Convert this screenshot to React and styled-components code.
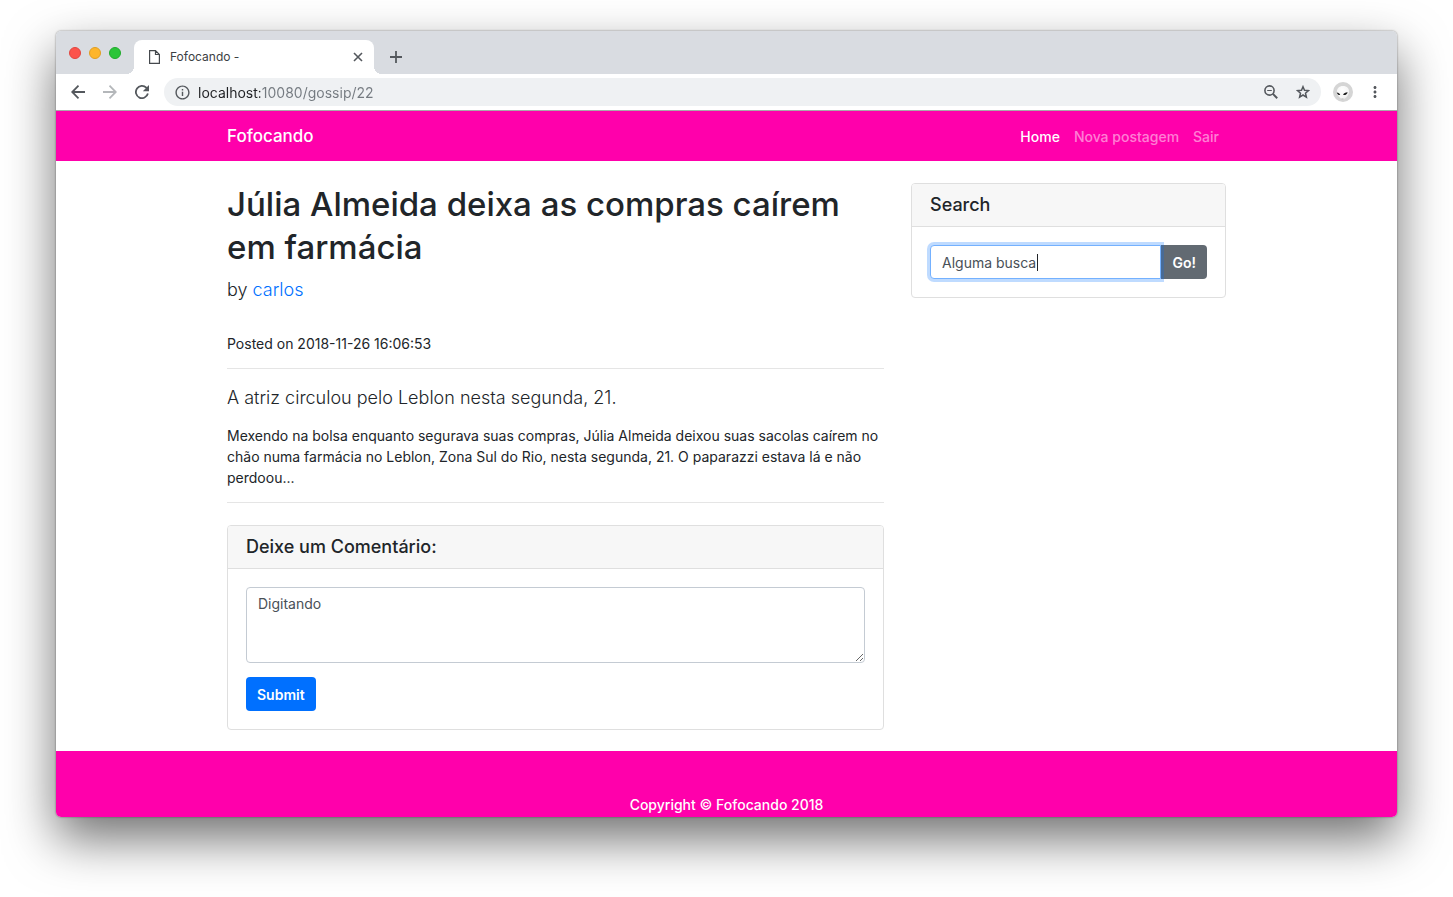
import React from "react";
import styled, { createGlobalStyle, css } from "styled-components";
import { MdInfoOutline, MdMoreVert } from "react-icons/md";

const GlobalStyle = createGlobalStyle`
  *, *::before, *::after { box-sizing: border-box; }
  body {
    margin: 0;
    background: #fff;
    color: #212529;
    font-family: Inter, "Liberation Sans", sans-serif;
    font-size: 14px;
    line-height: 21px;
  }
  button, input, textarea { font: inherit; }
  h1, h5, p { margin: 0; }
`;

/* ---------- browser window ---------- */

const Desktop = styled.div`
  padding: 31px 56px 80px;
`;

const BrowserWindow = styled.div`
  overflow: hidden;
  background: #fff;
  border-radius: 5px;
  box-shadow: 0 22px 50px rgba(0, 0, 0, 0.56), 0 0 2px rgba(0, 0, 0, 0.5);
`;

const TabStrip = styled.div`
  display: flex;
  align-items: flex-end;
  height: 43px;
  background: #d9dce1;
`;

const TrafficLights = styled.div`
  display: flex;
  align-self: center;
  gap: 8px;
  padding: 0 13px;
`;

const Light = styled.button`
  width: 12px;
  height: 12px;
  padding: 0;
  border: 1px solid ${(p) => p.$edge};
  border-radius: 50%;
  background: ${(p) => p.$fill};
`;

const Tab = styled.div`
  position: relative;
  display: flex;
  align-items: center;
  width: 240px;
  height: 34px;
  padding: 0 8px 1px 15px;
  background: #fff;
  border-radius: 8px 8px 0 0;
  color: #3c4043;
  font-size: 12px;

  &::before,
  &::after {
    content: "";
    position: absolute;
    bottom: 0;
    width: 8px;
    height: 8px;
  }
  &::before {
    right: 100%;
    background: radial-gradient(circle at 0 0, transparent 8px, #fff 8px);
  }
  &::after {
    left: 100%;
    background: radial-gradient(circle at 100% 0, transparent 8px, #fff 8px);
  }
`;

const TabTitle = styled.span`
  flex: 1;
  padding-left: 10px;
`;

const IconButton = styled.button`
  display: flex;
  align-items: center;
  justify-content: center;
  width: ${(p) => p.$width || 32}px;
  height: ${(p) => p.$height || 32}px;
  padding: 0;
  border: 0;
  background: none;
  color: ${(p) => p.$color || "#54585d"};
`;

const NewTab = styled(IconButton)`
  margin-left: 6px;
`;

const Toolbar = styled.div`
  display: flex;
  align-items: center;
  height: 37px;
  padding: 0 6px;
  border-bottom: 1px solid #a9a9a9;
`;

const AddressBar = styled.label`
  display: flex;
  flex: 1;
  align-items: center;
  height: 28px;
  margin: 0 6px;
  padding: 0 2px 0 10px;
  border-radius: 14px;
  background: #eff1f3;
  color: #54585d;
`;

const AddressInput = styled.input`
  flex: 1;
  min-width: 0;
  padding: 0;
  margin-left: 7px;
  border: 0;
  outline: 0;
  background: linear-gradient(to right, #202124 62px, #747a80 62px);
  background-clip: text;
  color: transparent;
`;

/* ---------- page ---------- */

const Container = styled.div`
  width: 100%;
  max-width: 1027px;
  margin: 0 auto;
  padding: 0 14px;
`;

const Navbar = styled.nav`
  background: #ff00ab;
`;

const NavRow = styled(Container)`
  display: flex;
  align-items: center;
  justify-content: space-between;
  height: 50px;
`;

const Brand = styled.a`
  color: #fff;
  font-size: 17px;
  font-weight: 500;
  line-height: 22px;
  text-decoration: none;
`;

const NavLinks = styled.div`
  display: flex;
  gap: 14px;
  padding-right: 7px;
`;

const NavLink = styled.a`
  color: ${(p) => (p.$active ? "#fff" : "rgba(255, 255, 255, 0.5)")};
  font-weight: 500;
  text-decoration: none;
`;

const Columns = styled(Container)`
  display: grid;
  grid-template-columns: minmax(0, 657fr) minmax(0, 315fr);
  align-items: start;
  gap: 27px;
  padding-top: 22px;
  padding-bottom: 21px;
`;

const Title = styled.h1`
  margin-bottom: 7px;
  font-size: 33px;
  font-weight: 500;
  line-height: 43px;
`;

const Lead = styled.p`
  font-size: 18px;
  font-weight: 300;
  line-height: 27px;
`;

const AuthorLink = styled.a`
  color: #0070ff;
  text-decoration: none;
`;

const PostedOn = styled.p`
  margin-top: 30px;
`;

const Rule = styled.hr`
  margin: 14px 0 15px;
  border: 0;
  border-top: 1px solid #e5e5e5;
`;

const BodyText = styled.p`
  margin-top: 14px;
`;

const Card = styled.section`
  border: 1px solid #dfdfdf;
  border-radius: 4px;
  background: #fff;
  ${(p) =>
    p.$spaced &&
    css`
      margin-top: 22px;
    `}
`;

const CardHeader = styled.h5`
  padding: 10px 18px;
  border-bottom: 1px solid #dfdfdf;
  border-radius: 3px 3px 0 0;
  background: #f7f7f7;
  font-size: 18px;
  font-weight: 500;
  line-height: 22px;
`;

const CardForm = styled.form`
  padding: 18px;
`;

const field = css`
  display: block;
  width: 100%;
  padding: 5px 11px;
  border: 1px solid #c4cbd3;
  background: #fff;
  color: #495057;
  outline: 0;
`;

const SearchGroup = styled.div`
  display: flex;
`;

const SearchField = styled.div`
  position: relative;
  z-index: 1;
  flex: 1;
  min-width: 0;
`;

const SearchInput = styled.input`
  ${field}
  height: 34px;
  border-color: #74b1ff;
  border-radius: 4px 0 0 4px;
  box-shadow: 0 0 0 3px rgba(0, 112, 255, 0.25);
`;

const Caret = styled.span`
  position: absolute;
  top: 9px;
  left: 107px;
  width: 1px;
  height: 17px;
  background: #212529;
`;

const Button = styled.button`
  height: 34px;
  padding: 0 11px;
  border: 0;
  border-radius: ${(p) => (p.$attached ? "0 4px 4px 0" : "4px")};
  background: ${(p) => (p.$primary ? "#0070ff" : "#626a72")};
  color: #fff;
  font-weight: 600;
`;

const CommentBox = styled.textarea`
  ${field}
  height: 76px;
  margin-bottom: 14px;
  border-radius: 4px;
  resize: vertical;
`;

const Footer = styled.footer`
  padding: 43px 14px 2px;
  background: #ff00ab;
  color: #fff;
  font-weight: 500;
  text-align: center;
`;

/* ---------- icons ---------- */

const LineIcon = ({ size = 14, weight = 2, children }) => (
  <svg
    width={size}
    height={size}
    viewBox={`0 0 ${size} ${size}`}
    fill="none"
    stroke="currentColor"
    strokeWidth={weight}
    aria-hidden="true"
  >
    {children}
  </svg>
);

const BackIcon = () => (
  <LineIcon weight={1.8}>
    <path d="M14 7H1.500M7.500.700 1.200 7l6.300 6.300" />
  </LineIcon>
);

const ForwardIcon = () => (
  <LineIcon weight={1.8}>
    <path d="M0 7h12.500M6.500.700 12.800 7l-6.300 6.300" />
  </LineIcon>
);

const ReloadIcon = () => (
  <LineIcon weight={1.8}>
    <path d="M12.900 8.600A6.100 6.100 0 1 1 11.300 2.700L12.300 3.700" />
    <path d="M14 0v6.200H7.800Z" fill="currentColor" stroke="none" />
  </LineIcon>
);

const CloseIcon = () => (
  <LineIcon size={10} weight={1.6}>
    <path d="M1 1l8 8M9 1 1 9" />
  </LineIcon>
);

const PlusIcon = () => (
  <LineIcon size={12} weight={1.8}>
    <path d="M6 0v12M0 6h12" />
  </LineIcon>
);

const ZoomOutIcon = () => (
  <LineIcon>
    <circle cx="5.500" cy="5.500" r="4.600" strokeWidth="1.600" />
    <path d="M8.900 8.900 13.200 13.200" />
    <path d="M3.200 5.500H7.800" strokeWidth="1.200" />
  </LineIcon>
);

const StarIcon = () => (
  <LineIcon weight={1.5}>
    <path d="M7 1.700 8.500 5.300 12.500 5.600 9.500 8.200 10.400 12.100 7 10 3.600 12.100 4.500 8.200 1.500 5.600 5.500 5.300Z" />
  </LineIcon>
);

const PageIcon = () => (
  <svg width="11" height="14" viewBox="0 0 11 14" fill="none" stroke="#45494d" strokeWidth="1.2" aria-hidden="true">
    <path d="M.6.6H6.5L10.4 4.5V13.4H.6Z M6.5.6V4.5H10.4" />
  </svg>
);

const Avatar = () => (
  <svg width="20" height="20" viewBox="0 0 20 20" aria-hidden="true">
    <defs>
      <radialGradient id="alienHead" cx="45%" cy="30%" r="75%">
        <stop offset="0" stopColor="#fff" />
        <stop offset="0.7" stopColor="#f4f4f4" />
        <stop offset="1" stopColor="#d8d8d8" />
      </radialGradient>
    </defs>
    <circle cx="10" cy="10" r="10" fill="#d5d5d5" />
    <path d="M4 10.500C3.500 6.500 6 4 10 4s6.500 2.500 6 6.500c-.4 3-3.500 6.500-6 7.500-2.500-1-5.600-4.500-6-7.500Z" fill="url(#alienHead)" />
    <path d="M3.800 10.500c1.700 0 3 .9 3.400 2.500-1.800.3-3-.7-3.400-2.500ZM14.600 10.300c-2.200 0-4 1-4.500 2.700 2.200.5 4.100-.6 4.500-2.700Z" fill="#1c1c1c" />
    <path d="M8.500 17h2" stroke="#aaa" strokeWidth=".7" />
  </svg>
);

export default function App() {
  return (
    <Desktop>
      <GlobalStyle />
      <BrowserWindow>
        <TabStrip>
          <TrafficLights>
            <Light $fill="#fc544c" $edge="#e2463f" aria-label="Close window" />
            <Light $fill="#fdb52a" $edge="#e09e22" aria-label="Minimize window" />
            <Light $fill="#2bc539" $edge="#20ab2c" aria-label="Zoom window" />
          </TrafficLights>
          <Tab>
            <PageIcon />
            <TabTitle>Fofocando -</TabTitle>
            <IconButton $width={16} $height={16} aria-label="Close tab">
              <CloseIcon />
            </IconButton>
          </Tab>
          <NewTab $height={34} aria-label="New tab">
            <PlusIcon />
          </NewTab>
        </TabStrip>
        <Toolbar>
          <IconButton aria-label="Back">
            <BackIcon />
          </IconButton>
          <IconButton $color="#b4b7ba" aria-label="Forward">
            <ForwardIcon />
          </IconButton>
          <IconButton aria-label="Reload">
            <ReloadIcon />
          </IconButton>
          <AddressBar>
            <MdInfoOutline size={17} />
            <AddressInput aria-label="Address" defaultValue="localhost:10080/gossip/22" />
            <IconButton aria-label="Zoom out">
              <ZoomOutIcon />
            </IconButton>
            <IconButton aria-label="Bookmark">
              <StarIcon />
            </IconButton>
          </AddressBar>
          <IconButton aria-label="Profile">
            <Avatar />
          </IconButton>
          <IconButton aria-label="Menu">
            <MdMoreVert size={18} />
          </IconButton>
        </Toolbar>

        <Navbar>
          <NavRow>
            <Brand href="#">Fofocando</Brand>
            <NavLinks>
              <NavLink href="#" $active>Home</NavLink>
              <NavLink href="#">Nova postagem</NavLink>
              <NavLink href="#">Sair</NavLink>
            </NavLinks>
          </NavRow>
        </Navbar>

        <Columns as="main">
          <article>
            <Title>Júlia Almeida deixa as compras caírem em farmácia</Title>
            <Lead>
              by <AuthorLink href="#">carlos</AuthorLink>
            </Lead>
            <PostedOn>Posted on 2018-11-26 16:06:53</PostedOn>
            <Rule />
            <Lead>A atriz circulou pelo Leblon nesta segunda, 21.</Lead>
            <BodyText>
              Mexendo na bolsa enquanto segurava suas compras, Júlia Almeida deixou suas sacolas caírem no chão numa
              farmácia no Leblon, Zona Sul do Rio, nesta segunda, 21. O paparazzi estava lá e não perdoou...
            </BodyText>
            <Rule />
            <Card $spaced>
              <CardHeader>Deixe um Comentário:</CardHeader>
              <CardForm>
                <CommentBox aria-label="Comentário" defaultValue="Digitando" />
                <Button type="button" $primary>Submit</Button>
              </CardForm>
            </Card>
          </article>
          <Card as="aside">
            <CardHeader>Search</CardHeader>
            <CardForm>
              <SearchGroup>
                <SearchField>
                  <SearchInput type="text" aria-label="Search" defaultValue="Alguma busca" />
                  <Caret />
                </SearchField>
                <Button type="button" $attached>Go!</Button>
              </SearchGroup>
            </CardForm>
          </Card>
        </Columns>

        <Footer>Copyright © Fofocando 2018</Footer>
      </BrowserWindow>
    </Desktop>
  );
}
